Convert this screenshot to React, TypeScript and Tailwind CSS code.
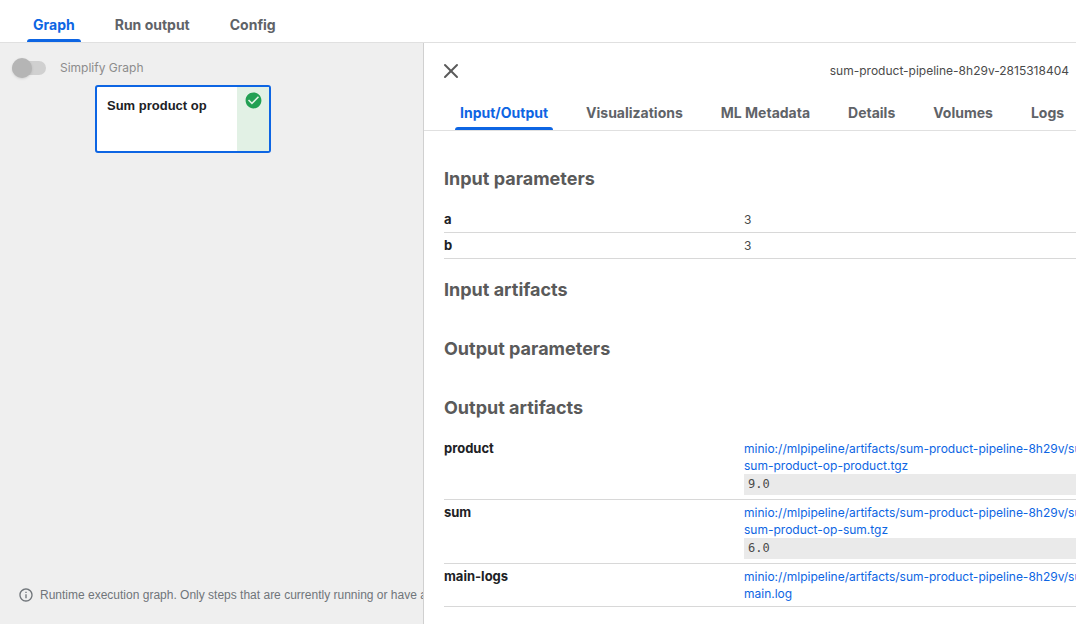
import { ReactNode, useState } from 'react';
import { X } from 'lucide-react';

const runTabs = ['Graph', 'Run output', 'Config'];
const nodeTabs = ['Input/Output', 'Visualizations', 'ML Metadata', 'Details', 'Volumes', 'Logs'];

const inputParameters = [
  { name: 'a', value: '3' },
  { name: 'b', value: '3' },
];

const artifactRoot = 'minio://mlpipeline/artifacts/sum-product-pipeline-8h29v/sum-product-pipeline-8h29v-2815318404/';

const outputArtifacts = [
  { name: 'product', file: 'sum-product-op-product.tgz', preview: '9.0' },
  { name: 'sum', file: 'sum-product-op-sum.tgz', preview: '6.0' },
  { name: 'main-logs', file: 'main.log' },
];

type TabsProps = { label: string; tabs: string[]; className: string; tabClassName: string };

const Tabs = ({ label, tabs, className, tabClassName }: TabsProps) => {
  const [active, setActive] = useState(tabs[0]);

  return (
    <div role="tablist" aria-label={label} className={`flex shrink-0 border-b border-[#e0e0e0] ${className}`}>
      {tabs.map((tab) => (
        <button
          key={tab}
          role="tab"
          aria-selected={tab === active}
          onClick={() => setActive(tab)}
          className={`relative h-9 shrink-0 pt-0.5 text-sm font-bold whitespace-nowrap ${tabClassName} ${
            tab === active ? 'text-[#0d65e3]' : 'text-[#5f6368]'
          }`}
        >
          {tab}
          {tab === active && <span className="absolute inset-x-3.5 bottom-0 h-[3px] rounded-t bg-[#0d65e3]" />}
        </button>
      ))}
    </div>
  );
};

const Section = ({ title, children }: { title: string; children?: ReactNode }) => (
  <section>
    <h2 className="pt-5 pb-[17px] text-lg leading-[22px] font-bold text-[#5a5a5a]">{title}</h2>
    {children && (
      <table className="w-full table-fixed border-collapse leading-[17px]">
        <colgroup>
          <col className="w-[300px]" />
          <col />
        </colgroup>
        <tbody>{children}</tbody>
      </table>
    )}
  </section>
);

const Row = ({ name, children }: { name: string; children: ReactNode }) => (
  <tr className="border-b border-[#d8d8d8]">
    <th scope="row" className="py-1 text-left align-top text-[13px] font-bold text-[#202124]">
      {name}
    </th>
    <td className="py-1 align-top text-xs leading-[17px] whitespace-nowrap text-[#4a4a4a]">{children}</td>
  </tr>
);

const GraphPane = () => (
  <div className="relative w-2/5 max-w-[423px] shrink-0 overflow-hidden bg-[#efefef]">
    <label className="flex h-[50px] items-center gap-3.5 pl-3 text-xs text-[#8c8c8c]">
      <span className="relative flex h-5 w-[34px] items-center">
        <input type="checkbox" className="peer sr-only" />
        <span className="h-3.5 w-full rounded-full bg-[#d0d0d0]" />
        <span className="absolute left-0 size-5 rounded-full bg-[#b5b5b5] shadow-sm peer-checked:left-3.5" />
      </span>
      Simplify Graph
    </label>

    {/* Graph node */}
    <button className="absolute top-[42px] left-[95px] flex h-[68px] w-44 overflow-hidden rounded-[3px] border-2 border-[#0d65e3] bg-white text-left">
      <span className="flex-1 py-[9px] pl-2.5 font-['Liberation_Sans',Arial,sans-serif] text-[13px] leading-5 font-bold text-[#202124]">
        Sum product op
      </span>
      <span className="flex h-full w-8 justify-center bg-[#e2f1e5] pt-1">
        <svg viewBox="0 0 24 24" className="size-[19px]" role="img" aria-label="Succeeded">
          <path
            fill="#22a053"
            d="M12 2C6.48 2 2 6.48 2 12s4.48 10 10 10 10-4.48 10-10S17.52 2 12 2zm-2 15-5-5 1.41-1.41L10 14.17l7.59-7.59L19 8l-9 9z"
          />
        </svg>
      </span>
    </button>

    {/* Legend */}
    <div className="absolute bottom-[19px] left-[18px] flex items-center gap-1.5 font-['Liberation_Sans',Arial,sans-serif] text-xs leading-5 whitespace-nowrap text-[#70757a]">
      <svg viewBox="0 0 24 24" className="size-4" fill="currentColor" aria-hidden="true">
        <path d="M11 17h2v-6h-2v6zm1-15C6.48 2 2 6.48 2 12s4.48 10 10 10 10-4.48 10-10S17.52 2 12 2zm0 18c-4.41 0-8-3.59-8-8s3.59-8 8-8 8 3.59 8 8-3.59 8-8 8zM11 9h2V7h-2v2z" />
      </svg>
      Runtime execution graph. Only steps that are currently running or have already completed are shown.
    </div>
  </div>
);

const NodePanel = () => (
  <aside className="flex min-w-0 flex-1 flex-col overflow-hidden border-l border-[#d0d0d0] bg-white">
    <div className="flex h-[51px] shrink-0 items-center justify-between pt-1 pr-[7px] pl-[15px]">
      <button aria-label="Close" className="text-[#5a5a5a]">
        <X className="size-6" strokeWidth={2} />
      </button>
      <span className="text-xs text-[#4a4a4a]">sum-product-pipeline-8h29v-2815318404</span>
    </div>
    <Tabs label="Step details" tabs={nodeTabs} className="pl-[17px]" tabClassName="px-[19px]" />
    <div className="flex-1 overflow-hidden pt-[17px] pl-5">
      <Section title="Input parameters">
        {inputParameters.map((param) => (
          <Row key={param.name} name={param.name}>
            {param.value}
          </Row>
        ))}
      </Section>
      <Section title="Input artifacts" />
      <Section title="Output parameters" />
      <Section title="Output artifacts">
        {outputArtifacts.map((artifact) => (
          <Row key={artifact.name} name={artifact.name}>
            <a href="#" className="block text-[#0d65e3]">
              {artifactRoot}
              <br />
              {artifact.file}
            </a>
            {artifact.preview && (
              <pre className="bg-[#eaeaea] px-1 font-['DejaVu_Sans_Mono',monospace] text-xs leading-[21px]">
                {artifact.preview}
              </pre>
            )}
          </Row>
        ))}
      </Section>
    </div>
  </aside>
);

const App = () => {
  return (
    <div className="flex h-screen flex-col overflow-hidden bg-white font-[Inter,sans-serif]">
      <Tabs label="Run" tabs={runTabs} className="pt-1.5 pl-[13px]" tabClassName="px-5" />
      <div className="flex min-h-0 flex-1">
        <GraphPane />
        <NodePanel />
      </div>
    </div>
  );
};

export default App;
